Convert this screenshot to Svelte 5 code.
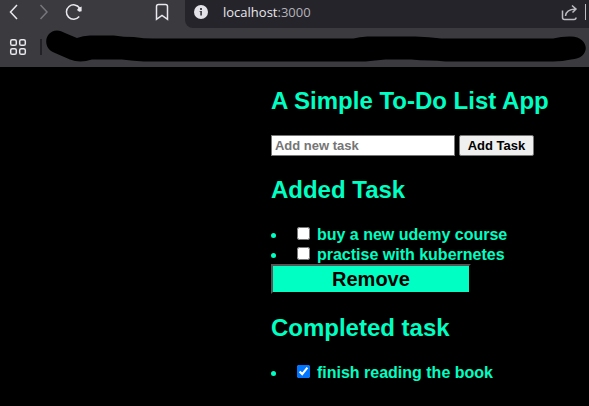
<script>
  let draft = $state('');
  let tasks = $state([
    { id: 1, title: 'buy a new udemy course', done: false },
    { id: 2, title: 'practise with kubernetes', done: false },
    { id: 3, title: 'finish reading the book', done: true }
  ]);
  const added = $derived(tasks.filter((t) => !t.done));
  const completed = $derived(tasks.filter((t) => t.done));

  function addTask(event) {
    event.preventDefault();
    if (!draft.trim()) return;
    tasks.push({ id: Date.now(), title: draft.trim(), done: false });
    draft = '';
  }
</script>

{#snippet item(task)}
  <li>
    <input type="checkbox" id="task-{task.id}" bind:checked={task.done} />
    <label for="task-{task.id}">{task.title}</label>
  </li>
{/snippet}

<header>
  <div class="toolbar">
    <nav>
      <button class="icon" aria-label="Back">
        <svg width="10" height="16" viewBox="0 0 10 16"><path d="M8 1 L1.5 8 L8 15" /></svg>
      </button>
      <button class="icon dim" aria-label="Forward">
        <svg width="10" height="16" viewBox="0 0 10 16"><path d="M1.5 1 L8 8 L1.5 15" /></svg>
      </button>
      <button class="icon" aria-label="Reload">
        <svg width="18" height="18" viewBox="0 0 18 18">
          <path d="M14.2 13.6 A7.2 7.2 0 1 1 14.6 5" />
          <path class="fill" d="M16.6 3.6 V8.2 L14.2 8.8 L12 7 L13.4 5 Z" />
        </svg>
      </button>
      <button class="icon mark" aria-label="Bookmark">
        <svg width="14" height="18" viewBox="0 0 14 18">
          <path d="M1.5 16.4 V3.5 Q1.5 1.5 3.5 1.5 H10.5 Q12.5 1.5 12.5 3.5 V16.4 L7 12.5 Z" />
        </svg>
      </button>
    </nav>
    <div class="address">
      <svg class="info" width="14" height="14" viewBox="0 0 14 14">
        <circle cx="7" cy="7" r="7" fill="#e3e2e8" />
        <path d="M6 3 h2 v2 h-2 Z M5.6 6 H8 V10.6 H6.2 V7 H5.6 Z" fill="#4a494f" />
      </svg>
      <span class="url">localhost<span class="port">:3000</span></span>
      <button class="icon share" aria-label="Share">
        <svg width="17" height="17" viewBox="0 0 17 17">
          <path d="M1.5 6.5 V13.5 Q1.5 15.5 3.5 15.5 H13 Q15 15.5 15 13.5" />
          <path d="M4.5 12 Q5 5.5 14.5 5 M11 1.5 L15 5 L11.5 8.5" />
        </svg>
      </button>
      <i class="rule"></i>
    </div>
  </div>
  <div class="bookmarks">
    <button class="icon" aria-label="Apps">
      <svg width="18" height="18" viewBox="0 0 18 18">
        <rect x="1.7" y="1.7" width="5.6" height="5.6" rx="1.6" />
        <rect x="10.7" y="1.7" width="5.6" height="5.6" rx="1.6" />
        <rect x="1.7" y="10.7" width="5.6" height="5.6" rx="1.6" />
        <rect x="10.7" y="10.7" width="5.6" height="5.6" rx="1.6" />
      </svg>
    </button>
    <i class="divider"></i>
    <svg class="scribble" height="34" viewBox="0 0 542 34" preserveAspectRatio="none">
      <path
        d="M11 0.5 C14 0.5 16 1.5 19 3 L31 8 Q37 5.5 44 5.5 H68 Q78 7 88 7 Q98 8.5 108 8.5 H308 Q314 7 322 6.5 H370 Q384 7 396 8.5 H508 Q516 6.5 524 6.5 C545 5 547 29 526 29.5 Q518 31.5 508 31.5 H400 Q392 30.5 384 30.5 Q374 30.5 366 29.5 H340 L320 31.5 H98 Q88 31 76 29.5 H46 Q34 33.5 24 29.5 L9 23 C-4 19 -2 1 11 0.5 Z"
      />
    </svg>
  </div>
</header>

<main>
  <h1>A Simple To-Do List App</h1>
  <form onsubmit={addTask}>
    <input type="text" class="new-task" placeholder="Add new task" aria-label="Add new task" bind:value={draft} />
    <button class="add">Add Task</button>
  </form>

  <h2>Added Task</h2>
  <ul>
    {#each added as task (task.id)}
      {@render item(task)}
    {/each}
  </ul>
  <button class="remove" onclick={() => (tasks = completed)}>Remove</button>

  <h2>Completed task</h2>
  <ul>
    {#each completed as task (task.id)}
      {@render item(task)}
    {/each}
  </ul>
</main>

<style>
  :global(body) {
    margin: 0;
    background: #000;
  }
  header {
    background: #3b3a3f;
    color: #e9e8ee;
  }
  .toolbar {
    display: flex;
    height: 28px;
  }
  nav {
    display: flex;
    flex: none;
    box-sizing: border-box;
    width: 185px;
    height: 24px;
    padding: 0 16px 0 9px;
    align-items: center;
    gap: 20px;
  }
  .icon {
    display: flex;
    padding: 0;
    border: 0;
    background: none;
    color: inherit;
  }
  .icon svg {
    fill: none;
    stroke: currentColor;
    stroke-width: 1.5;
  }
  .icon .fill {
    fill: currentColor;
    stroke: none;
  }
  .dim {
    color: #77767c;
  }
  .dim + .icon {
    margin-left: -4px;
  }
  .mark {
    margin-left: auto;
  }
  .address {
    display: flex;
    flex: 1;
    box-sizing: border-box;
    align-items: center;
    padding: 0 3px 4px 9px;
    border-bottom-left-radius: 8px;
    background: #25242a;
  }
  .url {
    margin-left: 15px;
    font: 13px/20px 'Open Sans', 'Noto Sans', sans-serif;
  }
  .port {
    color: #b4b3bb;
  }
  .share {
    margin-left: auto;
    color: #bdbcc2;
  }
  .rule {
    width: 1px;
    height: 16px;
    margin-left: 7px;
    background: #bdbcc2;
  }
  .bookmarks {
    display: flex;
    box-sizing: border-box;
    height: 39px;
    align-items: center;
    padding: 0 2px 1px 9px;
  }
  .divider {
    width: 2px;
    height: 16px;
    margin: 0 4px 0 13px;
    background: #222126;
  }
  .scribble {
    flex: 1;
    min-width: 0;
    fill: #000;
  }
  main {
    margin-left: 46%;
    padding: 20px 0;
    color: #00ffc2;
    font: bold 16px/20px 'Liberation Sans', Arial, sans-serif;
  }
  h1,
  h2 {
    margin: 0 0 20px;
    font-size: 24px;
    line-height: 28px;
  }
  h2 {
    margin-top: 20px;
  }
  form {
    display: flex;
    gap: 4px;
  }
  .new-task,
  .add {
    box-sizing: border-box;
    height: 21px;
    margin: 0;
    border: 1px solid #767676;
    font: bold 13px/15px 'Liberation Sans', Arial, sans-serif;
  }
  .new-task {
    width: 184px;
    padding: 2px 3px;
    background: #fff;
  }
  .new-task::placeholder {
    color: #757575;
  }
  .add {
    width: 75px;
    padding: 0;
    border-radius: 2px;
    background: #efefef;
    color: #000;
  }
  ul {
    margin: 0;
    padding: 0;
    list-style: none;
  }
  li {
    display: flex;
    height: 20px;
    align-items: flex-start;
  }
  li::before {
    width: 5px;
    height: 5px;
    margin: 9px 21px 0 0;
    border-radius: 50%;
    background: currentColor;
    content: '';
  }
  li input {
    width: 13px;
    height: 13px;
    margin: 3px 7px 0 0;
  }
  li label {
    line-height: 22px;
  }
  .remove {
    display: block;
    box-sizing: border-box;
    width: 200px;
    height: 30px;
    padding: 0;
    border: 2px solid;
    border-color: #555 #000 #000 #555;
    background: #00ffc2;
    color: #000;
    font: bold 20px/24px 'Liberation Sans', Arial, sans-serif;
  }
</style>
